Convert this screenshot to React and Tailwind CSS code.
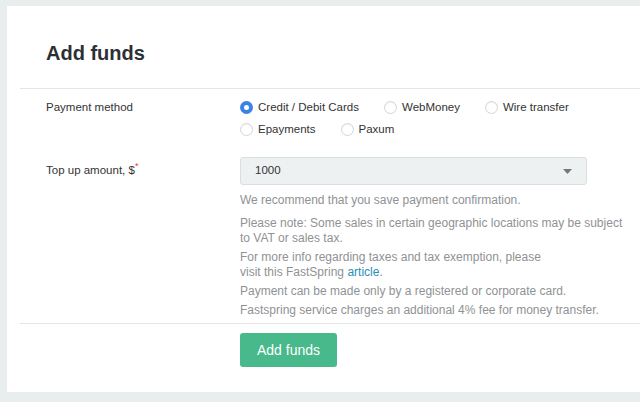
import { useState } from 'react'

const methods = [
  ['card', 'Credit / Debit Cards'],
  ['webmoney', 'WebMoney'],
  ['wire', 'Wire transfer'],
  ['epayments', 'Epayments'],
  ['paxum', 'Paxum'],
]

function Radio({ checked, label, onSelect }) {
  return (
    <label className="mr-[25px] inline-flex cursor-pointer items-center gap-[5px]" onClick={onSelect}>
      {checked ? (
        <span className="flex h-[13px] w-[13px] items-center justify-center rounded-full bg-[#3b82e6]">
          <span className="h-[5px] w-[5px] rounded-full bg-white" />
        </span>
      ) : (
        <span className="h-[13px] w-[13px] rounded-full border border-[#d3d6d8] bg-white shadow-[inset_0_1px_1px_rgba(0,0,0,0.06)]" />
      )}
      <span>{label}</span>
    </label>
  )
}

export default function App() {
  const [method, setMethod] = useState('card')

  return (
    <div className="h-[402px] w-[640px] overflow-hidden bg-[#e8eeee] pl-[7px] pt-[6px] font-['Liberation_Sans',Arial,sans-serif] text-[11.5px] text-[#333]">
      <div className="w-[660px] bg-white pb-[25px]">
        <div className="pl-[39px] pt-[36px] pb-[23px]">
          <h1 className="text-[20px] font-bold leading-[23px] text-[#2c3035]">Add funds</h1>
        </div>

        <div className="ml-[13px] border-t border-[#e3e6e7]" />

        <div className="grid grid-cols-[194px_1fr] pl-[39px] pt-[7px]">
          <div className="leading-[22px]">Payment method</div>
          <div className="leading-[22px]">
            <div className="flex">
              {methods.slice(0, 3).map(([key, label]) => (
                <Radio key={key} label={label} checked={method === key} onSelect={() => setMethod(key)} />
              ))}
            </div>
            <div className="flex">
              {methods.slice(3).map(([key, label]) => (
                <Radio key={key} label={label} checked={method === key} onSelect={() => setMethod(key)} />
              ))}
            </div>
          </div>

          <div className="mt-[17px] flex h-[28px] items-center">
            Top up amount, $<span className="relative -top-[4px] text-[9px] text-[#e53935]">*</span>
          </div>
          <div className="mt-[17px]">
            <div className="flex h-[28px] w-[347px] items-center justify-between rounded-[3px] border border-[#d9dedf] bg-[#eef1f1] pl-[14px] pr-[14px]">
              <span>1000</span>
              <svg width="9" height="5" viewBox="0 0 9 5"><path d="M0 0h9L4.5 5z" fill="#777" /></svg>
            </div>
            <div className="mt-[8px] space-y-[4px] text-[12px] leading-[15px] text-[#8f9294]">
              <p>We recommend that you save payment confirmation.</p>
              <p className="pt-[4px]">Please note: Some sales in certain geographic locations may be subject<br />to VAT or sales tax.</p>
              <p>For more info regarding taxes and tax exemption, please<br />visit this FastSpring <a href="#" className="text-[#2a8fb8]">article</a>.</p>
              <p>Payment can be made only by a registered or corporate card.</p>
              <p>Fastspring service charges an additional 4% fee for money transfer.</p>
            </div>
          </div>
        </div>

        <div className="ml-[13px] mt-[5px] border-t border-[#e3e6e7]" />

        <div className="pl-[233px] pt-[9px]">
          <button className="h-[34px] w-[97px] rounded-[3px] bg-[#47b98a] text-[14px] text-white">Add funds</button>
        </div>
      </div>
    </div>
  )
}
